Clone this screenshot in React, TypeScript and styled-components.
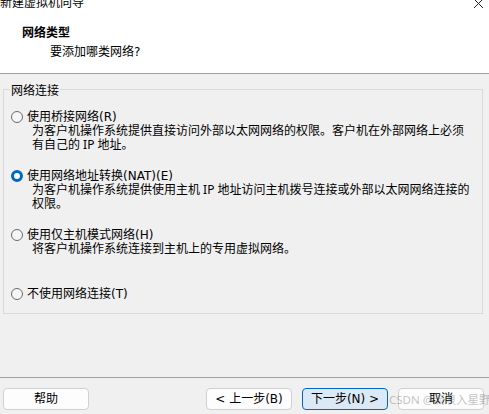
import React from "react";
import styled, { createGlobalStyle } from "styled-components";

const GlobalStyle = createGlobalStyle`
  html, body {
    margin: 0;
    padding: 0;
    background: #f0f0f0;
  }
  * {
    box-sizing: border-box;
  }
`;

interface NetworkOption {
  label: string;
  hotkey: string;
  lines: string[];
}

const options: NetworkOption[] = [
  {
    label: "使用桥接网络",
    hotkey: "(R)",
    lines: [
      "为客户机操作系统提供直接访问外部以太网网络的权限。客户机在外部网络上必须",
      "有自己的 IP 地址。",
    ],
  },
  {
    label: "使用网络地址转换",
    hotkey: "(NAT)(E)",
    lines: ["为客户机操作系统提供使用主机 IP 地址访问主机拨号连接或外部以太网网络连接的", "权限。"],
  },
  {
    label: "使用仅主机模式网络",
    hotkey: "(H)",
    lines: ["将客户机操作系统连接到主机上的专用虚拟网络。"],
  },
  {
    label: "不使用网络连接",
    hotkey: "(T)",
    lines: [],
  },
];

const App: React.FC = () => {
  const selected = 1;

  return (
    <>
      <GlobalStyle />
      <Window>
        <Header>
          <TitleBar>
            <TitleText>新建虚拟机向导</TitleText>
            <CloseIcon width="11" height="11" viewBox="0 0 11 11">
              <path d="M1 -1 L10 8 M10 -1 L1 8" stroke="#222" strokeWidth="1" fill="none" />
            </CloseIcon>
          </TitleBar>
          <HeaderTitle>网络类型</HeaderTitle>
          <HeaderSub>要添加哪类网络?</HeaderSub>
        </Header>

        <Body>
          <Group>
            <Legend>网络连接</Legend>
            <OptionList>
              {options.map((opt, i) => (
                <Option key={opt.label}>
                  <RadioRow>
                    <Radio $checked={i === selected} />
                    <RadioLabel>
                      {opt.label}
                      {opt.hotkey}
                    </RadioLabel>
                  </RadioRow>
                  {opt.lines.map((line) => (
                    <Description key={line}>{line}</Description>
                  ))}
                </Option>
              ))}
            </OptionList>
          </Group>
        </Body>

        <Footer>
          <Button>帮助</Button>
          <RightButtons>
            <Button>&lt; 上一步(B)</Button>
            <Button $primary>下一步(N) &gt;</Button>
            <Button>取消</Button>
          </RightButtons>
          <Watermark>CSDN @流浪入星野</Watermark>
        </Footer>
      </Window>
    </>
  );
};

const Window = styled.div`
  position: relative;
  width: 489px;
  height: 414px;
  overflow: hidden;
  display: flex;
  flex-direction: column;
  background: #f0f0f0;
  font-family: "DejaVu Sans", "Noto Sans CJK SC", sans-serif;
  font-size: 12px;
  color: #000;
`;

const Header = styled.div`
  height: 74px;
  background: #ffffff;
  border-bottom: 1px solid #a0a0a0;
  display: flex;
  flex-direction: column;
`;

const TitleBar = styled.div`
  height: 9px;
  display: flex;
  align-items: flex-end;
  justify-content: space-between;
  overflow: hidden;
  padding-right: 5px;
`;

const TitleText = styled.span`
  line-height: 14px;
  margin-bottom: -1px;
  color: #000;
`;

const CloseIcon = styled.svg`
  flex: none;
  align-self: flex-start;
`;

const HeaderTitle = styled.div`
  margin: 17px 0 0 22px;
  font-weight: 700;
  line-height: 14px;
`;

const HeaderSub = styled.div`
  margin: 5px 0 0 50px;
  line-height: 14px;
`;

const Body = styled.div`
  flex: 1;
  padding: 15px 6px 0 3px;
`;

const Group = styled.div`
  position: relative;
  height: 225px;
  border: 1px solid #d9d9d9;
`;

const Legend = styled.span`
  position: absolute;
  top: -6px;
  left: 6px;
  padding: 0 1px;
  background: #f0f0f0;
  line-height: 14px;
`;

const OptionList = styled.div`
  display: flex;
  flex-direction: column;
  padding: 20px 0 0 7px;
`;

const Option = styled.div`
  height: 59px;
  display: flex;
  flex-direction: column;
`;

const RadioRow = styled.div`
  display: flex;
  align-items: center;
  gap: 4px;
  height: 14px;
`;

const Radio = styled.span<{ $checked?: boolean }>`
  flex: none;
  width: 12px;
  height: 12px;
  border-radius: 50%;
  border: ${({ $checked }) => ($checked ? "3.5px solid #0067c0" : "1px solid #6b6b6b")};
  background: ${({ $checked }) => ($checked ? "#ffffff" : "#f6f6f6")};
`;

const RadioLabel = styled.span`
  line-height: 14px;
  white-space: nowrap;
`;

const Description = styled.div`
  padding-left: 21px;
  font-family: "Noto Sans", "Noto Sans CJK SC", sans-serif;
  line-height: 14px;
  white-space: nowrap;
`;

const Footer = styled.div`
  position: relative;
  height: 37px;
  border-top: 1px solid #a0a0a0;
  display: flex;
  justify-content: space-between;
  align-items: flex-start;
  padding: 10px 5px 0 3px;
`;

const RightButtons = styled.div`
  display: flex;
  gap: 10px;
`;

const Button = styled.button<{ $primary?: boolean }>`
  width: 86px;
  height: 22px;
  padding: 0;
  border-radius: 4px;
  border: 1px solid ${({ $primary }) => ($primary ? "#0067c0" : "#d0d0d0")};
  background: ${({ $primary }) => ($primary ? "#dbe9f6" : "#fdfdfd")};
  font-family: inherit;
  font-size: 12px;
  line-height: 18px;
  color: #000;
  cursor: pointer;
`;

const Watermark = styled.span`
  position: absolute;
  left: 389px;
  top: 15px;
  font-family: "Noto Sans", "Noto Sans CJK SC", sans-serif;
  font-size: 11.5px;
  line-height: 14px;
  color: rgba(120, 120, 120, 0.45);
  white-space: nowrap;
  pointer-events: none;
`;

export default App;
